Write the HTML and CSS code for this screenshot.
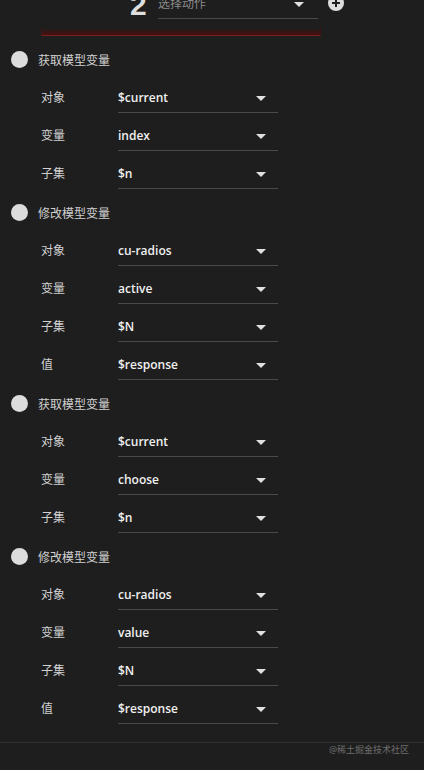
FILE: index.html
```html
<!DOCTYPE html>
<html lang="zh">
<head>
    <meta charset="UTF-8">
    <meta name="viewport" content="width=device-width, initial-scale=1.0">
    <title>动作编辑</title>
    <link rel="stylesheet" href="styles.css">
</head>
<body>
    <div class="step">
        <span class="step-no">2</span>
        <div class="select action"><span class="placeholder">选择动作</span><i class="caret"></i></div>
        <svg class="add" width="16" height="16" viewBox="0 0 16 16">
            <circle cx="8" cy="8" r="8" fill="#dcdcdc"/>
            <path d="M8 4v8M4 8h8" stroke="#1e1e1e" stroke-width="2"/>
        </svg>
    </div>
    <div class="step-box"></div>

    <div class="actions">
        <div class="group">
            <div class="group-title"><span class="dot"></span>获取模型变量</div>
            <div class="row"><span class="label">对象</span><div class="select"><span class="value">$current</span><i class="caret"></i></div></div>
            <div class="row"><span class="label">变量</span><div class="select"><span class="value">index</span><i class="caret"></i></div></div>
            <div class="row"><span class="label">子集</span><div class="select"><span class="value">$n</span><i class="caret"></i></div></div>
        </div>

        <div class="group">
            <div class="group-title"><span class="dot"></span>修改模型变量</div>
            <div class="row"><span class="label">对象</span><div class="select"><span class="value">cu-radios</span><i class="caret"></i></div></div>
            <div class="row"><span class="label">变量</span><div class="select"><span class="value">active</span><i class="caret"></i></div></div>
            <div class="row"><span class="label">子集</span><div class="select"><span class="value">$N</span><i class="caret"></i></div></div>
            <div class="row"><span class="label">值</span><div class="select"><span class="value">$response</span><i class="caret"></i></div></div>
        </div>

        <div class="group">
            <div class="group-title"><span class="dot"></span>获取模型变量</div>
            <div class="row"><span class="label">对象</span><div class="select"><span class="value">$current</span><i class="caret"></i></div></div>
            <div class="row"><span class="label">变量</span><div class="select"><span class="value">choose</span><i class="caret"></i></div></div>
            <div class="row"><span class="label">子集</span><div class="select"><span class="value">$n</span><i class="caret"></i></div></div>
        </div>

        <div class="group">
            <div class="group-title"><span class="dot"></span>修改模型变量</div>
            <div class="row"><span class="label">对象</span><div class="select"><span class="value">cu-radios</span><i class="caret"></i></div></div>
            <div class="row"><span class="label">变量</span><div class="select"><span class="value">value</span><i class="caret"></i></div></div>
            <div class="row"><span class="label">子集</span><div class="select"><span class="value">$N</span><i class="caret"></i></div></div>
            <div class="row"><span class="label">值</span><div class="select"><span class="value">$response</span><i class="caret"></i></div></div>
        </div>
    </div>

    <div class="footer">@稀土掘金技术社区</div>
</body>
</html>
```

FILE: styles.css
```css
body { margin: 0; background: #1e1e1e; color: #ccc; font-family: "Open Sans", "Noto Sans CJK SC", sans-serif; font-size: 12px; overflow: hidden; }

.step { display: flex; align-items: flex-start; height: 42px; margin-top: -14px; padding-left: 130px; }
.step-no { width: 28px; margin-top: 4px; font-family: "Liberation Sans", sans-serif; font-size: 30px; line-height: 30px; font-weight: bold; color: #dedede; }
.step .select { margin-top: 2px; }
.action .placeholder { color: #8c8c8c; }
.action .caret { right: 14px; top: 14px; }
.add { margin: 9px 0 0 10px; }
.step-box { width: 278px; height: 7px; margin-left: 41px; border: 1px solid #3e1515; border-top: none; border-bottom-color: #7a2020; background: linear-gradient(to bottom, rgba(70, 10, 10, 0), #4a0e0e); }

.actions { margin-top: 4px; }
.group-title { display: flex; align-items: center; height: 39px; color: #d0d0d0; }
.dot { width: 17px; height: 17px; margin: 0 10px 0 11px; border-radius: 50%; background: #dcdcdc; }

.row { display: flex; align-items: flex-start; height: 38px; padding-left: 41px; }
.label { width: 77px; line-height: 38px; color: #d0d0d0; }
.select { position: relative; width: 160px; height: 30px; margin-top: 3px; border-bottom: 1px solid #4a4a4a; line-height: 32px; }
.value { color: #f0f0f0; font-weight: 600; }
.caret { position: absolute; right: 12px; top: 14px; width: 0; height: 0; border-left: 5px solid transparent; border-right: 5px solid transparent; border-top: 5px solid #e0e0e0; }

.footer { margin-top: 14px; border-top: 1px solid #303030; padding-right: 15px; text-align: right; font-size: 9px; line-height: 14px; color: #6e6e6e; }
```
